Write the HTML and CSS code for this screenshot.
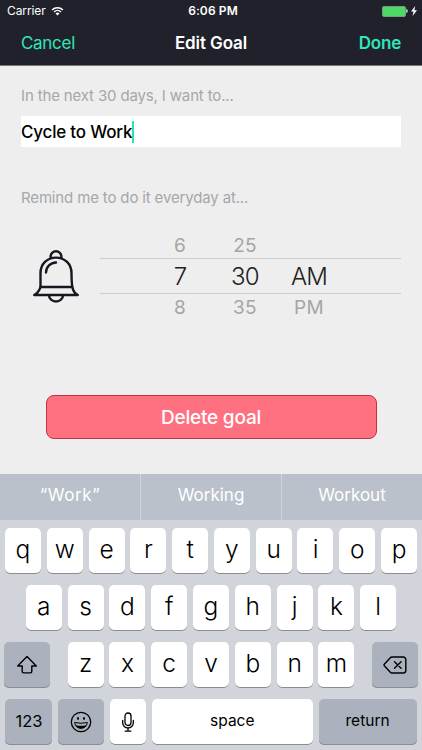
FILE: index.html
```html
<!DOCTYPE html>
<html lang="en">
<head>
    <meta charset="UTF-8">
    <meta name="viewport" content="width=device-width, initial-scale=1.0">
    <title>Edit Goal</title>
    <link rel="stylesheet" href="styles.css">
</head>
<body>
    <header class="header">
        <div class="status-bar">
            <div class="carrier">
                <span>Carrier</span>
                <svg class="wifi" viewBox="0 0 14 11" width="13" height="10">
                    <path d="M1 4.3a8.6 8.6 0 0 1 12 0M3.2 6.6a5.4 5.4 0 0 1 7.6 0" fill="none" stroke="#fff" stroke-width="1.6"/>
                    <path d="M4.9 8.2a3 3 0 0 1 4.2 0L7 10.4z" fill="#fff"/>
                </svg>
            </div>
            <span class="time">6:06 PM</span>
            <div class="power">
                <span class="battery"></span>
                <span class="battery-tip"></span>
                <svg class="bolt" viewBox="0 0 6 10" width="6" height="10">
                    <path d="M4.2 0L0 5.6h2.5L1.6 10 6 4.2H3.4z" fill="#fff"/>
                </svg>
            </div>
        </div>
        <nav class="nav-bar">
            <a class="cancel">Cancel</a>
            <h1 class="title">Edit Goal</h1>
            <a class="done">Done</a>
        </nav>
    </header>

    <main class="content">
        <p class="label">In the next 30 days, I want to...</p>
        <div class="goal-input"><span>Cycle to Work</span><i class="caret"></i></div>
        <p class="label remind">Remind me to do it everyday at...</p>

        <div class="reminder">
            <svg class="bell" viewBox="0 0 48 54" width="48" height="54" fill="none" stroke="#17181f" stroke-width="2.4" stroke-linecap="round" stroke-linejoin="round">
                <path d="M18.6 7.8V6.7a5.4 5.4 0 0 1 10.8 0v1.1"/>
                <path d="M8.5 36.5V23.2C8.5 14 15.2 7.6 24 7.6s15.5 6.4 15.5 15.6c0 7 .2 13.3 1.7 16.7 1.1 2.5 2.8 4.4 4.6 5.1H2.2c2.2-1 4.2-3.1 5-4.9.9-2 1.3-2.3 1.3-3.6z"/>
                <path d="M8.5 37H40"/>
                <path d="M14 22.5c.2-5.8 4.3-9.8 10-10"/>
                <path d="M17 45.3a7 6.2 0 0 0 14 0"/>
            </svg>
            <div class="picker">
                <div class="picker-row faded">
                    <span>6</span><span>25</span><span></span>
                </div>
                <div class="picker-row selected">
                    <span>7</span><span>30</span><span>AM</span>
                </div>
                <div class="picker-row faded">
                    <span>8</span><span>35</span><span>PM</span>
                </div>
            </div>
        </div>

        <button class="delete-btn">Delete goal</button>
    </main>

    <section class="keyboard">
        <div class="suggestions">
            <span class="quoted">“Work”</span>
            <span>Working</span>
            <span>Workout</span>
        </div>
        <div class="keys">
            <div class="key-row">
                <span class="key">q</span><span class="key">w</span><span class="key">e</span><span class="key">r</span><span class="key">t</span><span class="key">y</span><span class="key">u</span><span class="key">i</span><span class="key">o</span><span class="key">p</span>
            </div>
            <div class="key-row">
                <span class="key">a</span><span class="key">s</span><span class="key">d</span><span class="key">f</span><span class="key">g</span><span class="key">h</span><span class="key">j</span><span class="key">k</span><span class="key">l</span>
            </div>
            <div class="key-row spread">
                <span class="key dark side">
                    <svg viewBox="0 0 22 20" width="22" height="20" fill="none" stroke="#000" stroke-width="1.4" stroke-linejoin="round">
                        <path d="M11 1.5L20.3 11h-4.5v5.5a1.4 1.4 0 0 1-1.4 1.4H7.6a1.4 1.4 0 0 1-1.4-1.4V11H1.7z"/>
                    </svg>
                </span>
                <div class="letters">
                    <span class="key">z</span><span class="key">x</span><span class="key">c</span><span class="key">v</span><span class="key">b</span><span class="key">n</span><span class="key">m</span>
                </div>
                <span class="key dark side">
                    <svg viewBox="0 0 24 18" width="24" height="18" fill="none" stroke="#000" stroke-width="1.4" stroke-linejoin="round" stroke-linecap="round">
                        <path d="M9 1h11.3a2.5 2.5 0 0 1 2.5 2.5v11a2.5 2.5 0 0 1-2.5 2.5H9q-1 0-1.7-.8L1.3 9.7q-.6-.7 0-1.4l6-6.5Q8 1 9 1z"/>
                        <path d="M11.5 5.7l6.6 6.6M18.1 5.7l-6.6 6.6"/>
                    </svg>
                </span>
            </div>
            <div class="key-row">
                <span class="key dark numbers">123</span>
                <span class="key dark icon-key emoji">
                    <svg viewBox="0 0 22 22" width="22" height="22">
                        <circle cx="11" cy="11" r="9.7" fill="none" stroke="#000" stroke-width="1.3"/>
                        <ellipse cx="8" cy="7.5" rx="1" ry="1.4"/>
                        <ellipse cx="14" cy="7.5" rx="1" ry="1.4"/>
                        <path d="M4.6 11.5q6.4 1.5 12.8 0c-.5 3.5-3.2 5.8-6.4 5.8s-5.900-2.300-6.400-5.800z" fill="none" stroke="#000"/>
                        <path d="M5.3 14.2q5.7 1.3 11.4 0c-1.1 2.1-3.3 3.2-5.7 3.2s-4.6-1.1-5.7-3.2z"/>
                    </svg>
                </span>
                <span class="key icon-key">
                    <svg viewBox="0 0 14 20" width="14" height="20" fill="none" stroke="#000" stroke-width="1.3" stroke-linecap="round">
                        <rect x="4" y="1" width="6" height="12.5" rx="3"/>
                        <path d="M1.7 8.5v2.2a5.3 5.3 0 0 0 10.6 0V8.5M7 16v3M4.2 19.2h5.6"/>
                    </svg>
                </span>
                <span class="key space">space</span>
                <span class="key dark return">return</span>
            </div>
        </div>
    </section>
</body>
</html>
```

FILE: styles.css
```css
* {
    box-sizing: border-box;
}

body {
    margin: 0;
    width: 422px;
    height: 750px;
    display: flex;
    flex-direction: column;
    overflow: hidden;
    background-color: #eeeeee;
    font-family: Inter, "Liberation Sans", sans-serif;
}

/* Header */
.header {
    height: 66px;
    background-color: #20212a;
    border-bottom: 1px solid #77777c;
    color: #fff;
}

.status-bar {
    height: 22px;
    padding: 0 5px 0 7px;
    display: grid;
    grid-template-columns: 1fr auto 1fr;
    align-items: center;
    font-size: 12px;
    line-height: 20px;
}

.carrier,
.power {
    display: flex;
    align-items: center;
    height: 20px;
}

.carrier {
    gap: 5px;
    letter-spacing: -0.1px;
}

.time {
    padding-left: 2px;
    font-weight: 600;
    letter-spacing: 0.1px;
}

.power {
    justify-content: flex-end;
}

.battery {
    width: 24px;
    height: 11px;
    background-color: #4cd964;
    border: 1px solid #6f9f7b;
    border-radius: 2px;
}

.battery-tip {
    width: 2px;
    height: 4px;
    background-color: #a9b5ad;
    border-radius: 0 2px 2px 0;
    margin-right: 3px;
}

.nav-bar {
    height: 43px;
    padding: 0 21px 1px;
    display: grid;
    grid-template-columns: 1fr auto 1fr;
    align-items: center;
    font-size: 17px;
}

.title {
    margin: 0;
    font-size: 17px;
    font-weight: 600;
    letter-spacing: -0.1px;
}

.cancel,
.done {
    color: #31e5b9;
}

.cancel {
    letter-spacing: -0.3px;
}

.done {
    text-align: right;
    font-weight: 600;
    letter-spacing: -0.2px;
}

/* Form */
.content {
    height: 408px;
    padding: 19px 21px 0;
    display: flex;
    flex-direction: column;
}

.label {
    margin: 0;
    height: 22px;
    line-height: 22px;
    font-size: 15px;
    letter-spacing: -0.15px;
    color: #a5a7aa;
}

.goal-input {
    height: 31px;
    margin-top: 9px;
    display: flex;
    align-items: center;
    background-color: #fff;
    color: #000;
    font-size: 17px;
    font-weight: 500;
    letter-spacing: -0.2px;
}

.caret {
    width: 2px;
    height: 22px;
    background-color: #25e3b5;
}

.remind {
    margin-top: 40px;
}

.reminder {
    margin-top: 23px;
    display: flex;
    align-items: flex-start;
    gap: 20px;
}

.bell {
    margin: 18px 0 0 11px;
}

.picker {
    flex: 1;
}

.picker-row {
    display: grid;
    grid-template-columns: 60px 70px 58px;
    padding-left: 50px;
    text-align: center;
}

.faded {
    height: 26px;
    line-height: 28px;
    font-size: 19px;
    letter-spacing: 0.3px;
    color: #a5a5a5;
}

.selected {
    height: 36px;
    line-height: 36px;
    border-top: 1px solid #cbcccd;
    border-bottom: 1px solid #cbcccd;
    font-size: 24px;
    font-weight: 350;
    letter-spacing: -0.8px;
    color: #202020;
}

.delete-btn {
    width: 331px;
    height: 44px;
    margin: 75px auto 0;
    padding: 0;
    border: 1px solid #c42f43;
    border-radius: 8px;
    background-color: #ff7080;
    color: #fff;
    font-family: inherit;
    font-size: 19px;
    font-weight: 450;
    letter-spacing: -0.2px;
}

/* Keyboard */
.keyboard {
    height: 276px;
    background-color: #d1d5db;
}

.suggestions {
    height: 46px;
    display: grid;
    grid-template-columns: 140px 141px 141px;
    background-color: #bac1ca;
    color: #fff;
    font-size: 17px;
    line-height: 43px;
    text-align: center;
}

.suggestions span + span {
    border-left: 1px solid #d1d5db;
}

.quoted {
    letter-spacing: 0.6px;
}

.keys {
    padding: 8px 4px 0;
    display: flex;
    flex-direction: column;
    gap: 11px;
}

.key-row,
.letters {
    display: flex;
    justify-content: center;
    gap: 5.8px;
}

.key-row.spread {
    justify-content: space-between;
}

.key {
    width: 36px;
    height: 46px;
    padding-bottom: 4px;
    display: flex;
    align-items: center;
    justify-content: center;
    background-color: #fff;
    border-radius: 5px;
    box-shadow: inset 0 -1px 0 #898c90;
    font-size: 24.5px;
    font-weight: 350;
    color: #000;
}

.dark {
    background-color: #abb2bd;
}

.side {
    width: 46px;
}

.side,
.icon-key {
    padding-bottom: 0;
}

.numbers,
.space,
.return {
    font-size: 15.5px;
    font-weight: 400;
}

.numbers {
    width: 47px;
    padding-bottom: 2px;
    font-size: 16.5px;
}

.emoji {
    width: 46px;
}

.space {
    width: 161px;
}

.return {
    width: 98px;
}
```
